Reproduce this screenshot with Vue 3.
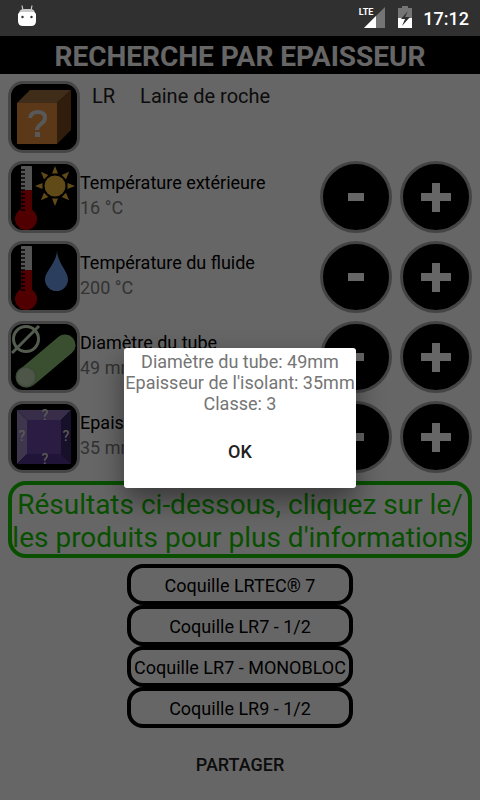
<script setup>
import { ref } from 'vue'

const settings = ref([
  { id: 'outside', label: 'Température extérieure', value: 16, unit: '°C' },
  { id: 'fluid', label: 'Température du fluide', value: 200, unit: '°C' },
  { id: 'diameter', label: 'Diamètre du tube', value: 49, unit: 'mm' },
  { id: 'thickness', label: 'Epaisseur', value: 35, unit: 'mm' }
])

const products = ['Coquille LRTEC® 7', 'Coquille LR7 - 1/2', 'Coquille LR7 - MONOBLOC', 'Coquille LR9 - 1/2']

const dialogOpen = ref(true)
const ticks = Array.from({ length: 11 }, (_, i) => 7 + i * 4)
const rays = [0, 45, 90, 135, 180, 225, 270, 315]
</script>

<template>
  <div class="screen">
    <header class="status-bar">
      <svg class="robot" width="18" height="22" viewBox="0 0 18 22" aria-hidden="true">
        <path d="M4 0.500l1 5M14 0.500l-1 5" stroke="#ccc" stroke-width="1.200" fill="none" />
        <path d="M1 9q0-5 5-5h6q5 0 5 5z" fill="#c8c8c8" />
        <path d="M0 9q1-2 3-2h12q2 0 3 2v7q0 5-5 5H5q-5 0-5-5z" fill="#fff" />
        <circle cx="4.500" cy="12" r="1.200" fill="#303030" />
        <circle cx="13.500" cy="12" r="1.200" fill="#303030" />
      </svg>
      <div class="status-right">
        <span class="lte">LTE</span>
        <svg class="signal" width="21" height="21" viewBox="0 0 21 21" aria-hidden="true">
          <path d="M21 0v21H0z" fill="#757575" />
          <path d="M12 9v12H0z" fill="#fff" />
        </svg>
        <svg class="battery" width="14" height="22" viewBox="0 0 14 22" aria-hidden="true">
          <path d="M0 2h4V0h6v2h4v10H0z" fill="#757575" />
          <path d="M0 12h14v10H0z" fill="#fff" />
          <path d="M10 5L3 13h4l-3 7 8-9H7z" fill="#303030" />
        </svg>
        <time class="clock">17:12</time>
      </div>
    </header>

    <div class="content">
      <h1 class="title">RECHERCHE PAR EPAISSEUR</h1>

      <main class="main">
        <div class="row material">
          <div class="tile">
            <svg viewBox="1 1 66 66" aria-hidden="true">
              <path d="M7 20L20 7h41L47 20z" fill="#a0703f" />
              <path d="M47 20L61 7v40L47 61z" fill="#784a1c" />
              <path d="M7 20h40v41H7z" fill="#e18c3c" />
              <path d="M20 35q1-6 8-6 7 0 7 6 0 3-4 6-4 3-4 6" fill="none" stroke="#ddd" stroke-width="4" />
              <path d="M25 49h5v5h-5z" fill="#ddd" />
            </svg>
          </div>
          <p class="material-name"><span>LR</span><span>Laine de roche</span></p>
        </div>

        <div v-for="s in settings" :key="s.id" class="row">
          <div class="tile">
            <svg viewBox="1 1 66 66" aria-hidden="true">
              <template v-if="s.id === 'outside' || s.id === 'fluid'">
                <path d="M11 4q0-1 1-1h9q1 0 1 1v25H11z" fill="#d2d2d2" />
                <path d="M11 27h11v27H11z" fill="#c80000" />
                <circle cx="16" cy="56" r="11" fill="#c80000" />
                <path v-for="y in ticks" :key="y" :d="`M11 ${y}h4`" stroke="#000" stroke-width="1.500" />
              </template>
              <g v-if="s.id === 'outside'" fill="#f0b93c">
                <circle cx="45" cy="23" r="10.500" />
                <path
                  v-for="r in rays"
                  :key="r"
                  d="M42 10.500L45 3l3 7.500z"
                  :transform="`rotate(${r} 45 23)`"
                />
              </g>
              <path
                v-if="s.id === 'fluid'"
                d="M47 8C48 21 58 28 58 36.500A11.500 11.500 0 0 1 35 36.500C35 28 46 21 47 8z"
                fill="#6e9bea"
              />
              <template v-if="s.id === 'diameter'">
                <path d="M17 54L55 22" stroke="#91c378" stroke-width="21" stroke-linecap="round" />
                <circle cx="16" cy="54" r="10.500" fill="#8cae7d" />
                <circle cx="16" cy="54" r="9.500" fill="#b9d2af" />
                <circle cx="16" cy="54" r="7.500" fill="#c3d7ba" />
                <circle cx="16" cy="16" r="12.500" fill="none" stroke="#d2e6c8" stroke-width="3" />
                <path d="M2 30L29 3" stroke="#d2e6c8" stroke-width="3" />
              </template>
              <template v-if="s.id === 'thickness'">
                <path d="M7 7h54L51 17H17z" fill="#8c73b9" />
                <path d="M7 7l10 10v34L7 61z" fill="#9b87be" />
                <path d="M61 7L51 17v34l10 10z" fill="#3c2864" />
                <path d="M7 61l10-10h34l10 10z" fill="#50328c" />
                <path d="M17 17h34v34H17z" fill="#6946a5" />
                <g class="marks">
                  <text x="35" y="17">?</text>
                  <text x="12" y="38">?</text>
                  <text x="56" y="38">?</text>
                  <text x="35" y="61">?</text>
                </g>
              </template>
            </svg>
          </div>
          <div class="reading">
            <p class="label">{{ s.label }}</p>
            <p class="value">{{ s.value }} {{ s.unit }}</p>
          </div>
          <button type="button" class="round" :aria-label="`Diminuer ${s.label}`" @click="s.value--">
            <svg viewBox="1 1 66 66" aria-hidden="true"><path d="M26 30h16v8H26z" fill="#fff" /></svg>
          </button>
          <button type="button" class="round" :aria-label="`Augmenter ${s.label}`" @click="s.value++">
            <svg viewBox="1 1 66 66" aria-hidden="true">
              <path d="M30 20h8v10h11v8H38v11h-8V38H19v-8h11z" fill="#fff" />
            </svg>
          </button>
        </div>

        <p class="results">Résultats ci-dessous, cliquez sur le/<wbr />les produits pour plus d'informations</p>

        <div class="products">
          <button v-for="p in products" :key="p" type="button" class="product">{{ p }}</button>
        </div>

        <button type="button" class="share">PARTAGER</button>
      </main>

      <div v-if="dialogOpen" class="scrim">
        <div class="dialog" role="dialog" aria-modal="true">
          <p>Diamètre du tube: 49mm</p>
          <p>Epaisseur de l'isolant: 35mm</p>
          <p>Classe: 3</p>
          <button type="button" class="ok" @click="dialogOpen = false">OK</button>
        </div>
      </div>
    </div>
  </div>
</template>

<style>
body {
  margin: 0;
  background: #fff;
}
</style>

<style scoped>
.screen {
  display: flex;
  flex-direction: column;
  min-height: 100vh;
  font-family: Roboto, "Liberation Sans", sans-serif;
  font-size: 18px;
  color: #000;
}

p,
h1 {
  margin: 0;
}

button {
  font: inherit;
  color: inherit;
  cursor: pointer;
}

svg {
  display: block;
}

.status-bar {
  display: flex;
  align-items: center;
  justify-content: space-between;
  box-sizing: border-box;
  height: 36px;
  padding: 0 11px 0 18px;
  background: #303030;
  color: #fff;
}

.robot {
  margin-bottom: 4px;
}

.status-right {
  display: flex;
  align-items: center;
}

.lte {
  align-self: flex-start;
  font-size: 9px;
  font-weight: 700;
  line-height: 12px;
  margin-top: 6px;
  margin-right: -9px;
}

.signal {
  margin-bottom: 2px;
}

.battery {
  margin: 0 11px 2px 13px;
}

.clock {
  font-weight: 500;
  line-height: 34px;
  padding-top: 2px;
}

.content {
  position: relative;
  flex: 1;
}

.title {
  background: #000;
  color: #fff;
  font-size: 28px;
  font-weight: 700;
  line-height: 38px;
  text-align: center;
  padding-top: 2px;
  height: 36px;
}

.main {
  display: flex;
  flex-direction: column;
  padding: 7px 8px 0;
}

.row {
  display: flex;
  align-items: center;
  gap: 8px;
  margin-bottom: 8px;
}

.tile {
  box-sizing: border-box;
  width: 72px;
  height: 72px;
  flex-shrink: 0;
  border: 3px solid #b0b0b0;
  border-radius: 15px;
  background: #000;
  overflow: hidden;
}

.marks {
  font-size: 14px;
  font-weight: 500;
  fill: #ddd;
  text-anchor: middle;
}

.material {
  align-items: flex-start;
  gap: 12px;
}

.material-name {
  display: flex;
  gap: 25px;
  font-size: 20px;
  line-height: 30px;
  color: #212121;
}

.reading {
  flex: 1;
  margin-left: -8px;
  padding-bottom: 4px;
  line-height: 25px;
}

.value {
  color: #808080;
}

.round {
  box-sizing: border-box;
  width: 72px;
  height: 72px;
  flex-shrink: 0;
  padding: 0;
  border: 3px solid #aaa;
  border-radius: 50%;
  background: #000;
}

.results {
  border: 4px solid #14c800;
  border-radius: 18px;
  color: #14c800;
  font-size: 28px;
  line-height: 33px;
  padding-top: 3px;
  text-align: center;
}

.products {
  display: flex;
  flex-direction: column;
  align-self: center;
  margin-top: 6px;
}

.product {
  height: 41px;
  padding: 2px 3px 0;
  border: 4px solid #000;
  border-radius: 16px;
  background: transparent;
}

.share {
  align-self: center;
  height: 48px;
  margin-top: 12px;
  border: none;
  background: transparent;
  color: #212121;
  font-weight: 500;
}

.scrim {
  position: absolute;
  inset: 0;
  display: flex;
  align-items: center;
  justify-content: center;
  background: rgba(0, 0, 0, 0.6);
}

.dialog {
  display: flex;
  flex-direction: column;
  align-items: center;
  padding: 3px 1px 0;
  border-radius: 3px;
  background: #fff;
  color: #757575;
  line-height: 21px;
  box-shadow: 0 12px 28px rgba(0, 0, 0, 0.45);
}

.ok {
  width: 132px;
  height: 74px;
  border: none;
  background: transparent;
  color: #212121;
  font-weight: 500;
}
</style>
